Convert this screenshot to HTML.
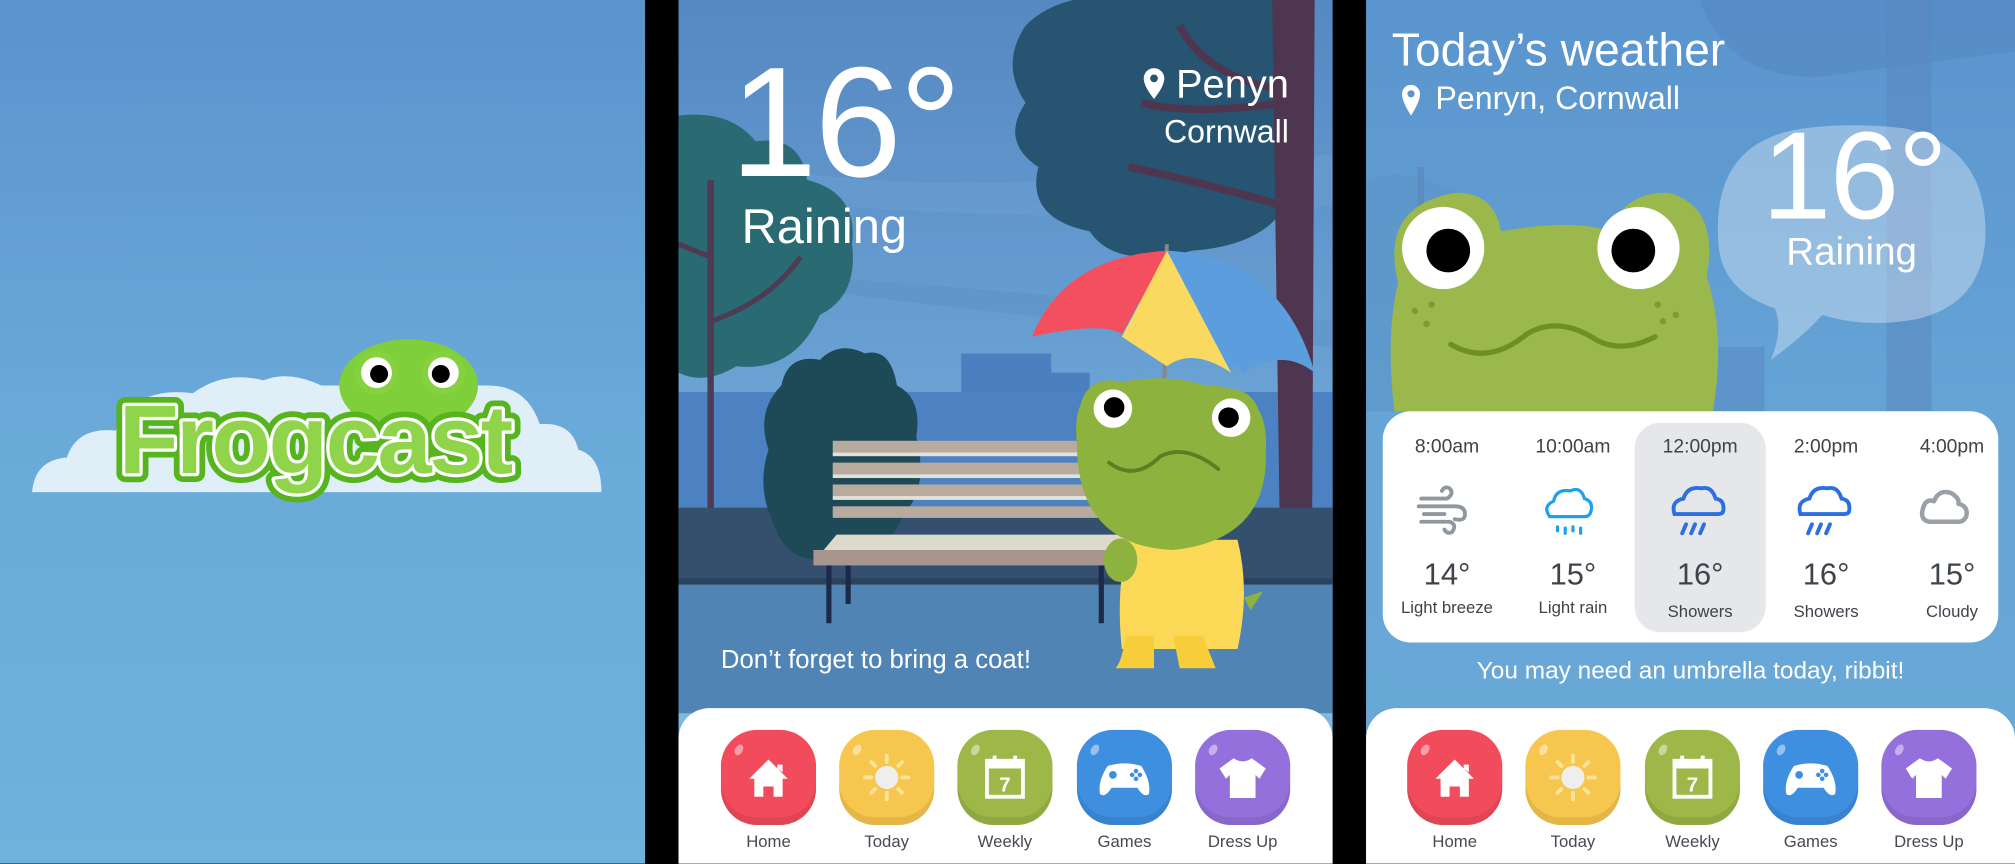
<!DOCTYPE html>
<html><head><meta charset="utf-8">
<style>
html,body{margin:0;padding:0;background:#000;width:2015px;height:863px;overflow:hidden}
#s{position:absolute;left:0;top:0;width:1568px;height:672px;transform:scale(1.28508,1.28508);transform-origin:0 0;font-family:"Liberation Sans","DejaVu Sans",sans-serif;background:#000}
.p{position:absolute;top:0;height:672px;overflow:hidden}
.a{position:absolute}
.w{color:#fff}
.nav{position:absolute;left:0;right:0;top:551px;height:130px;background:#fff;border-radius:24px 24px 0 0}
.b{position:absolute;top:17px;width:74px;height:74px;border-radius:28px;box-shadow:inset 0 -6px 0 rgba(0,0,0,.08)}
.b:before{content:"";position:absolute;left:11px;top:11px;width:6px;height:9px;border-radius:50%;background:rgba(255,255,255,.45);transform:rotate(30deg)}
.l{position:absolute;top:96px;width:90px;text-align:center;font-size:13px;color:#454a52}
.t{position:absolute;width:98px;text-align:center;color:#3e434a}
</style></head><body><div id="s">

<!-- Panel 1 -->
<div class="p" style="left:0;width:502px;background:linear-gradient(#5b93cd,#6aaad9 50%,#6fb2dc)">
  <svg class="a" style="left:0;top:0" width="502" height="672">
    <path d="M25 383 Q27 358 52 356 Q60 332 90 335 Q105 300 150 306 Q175 288 205 296 Q225 288 250 300 L380 300 Q410 300 420 330 Q445 328 450 350 Q468 355 468 383 Z" fill="#e0eef8"/>
    <ellipse cx="318" cy="300" rx="54" ry="36" fill="#7fcf3a"/>
    <circle cx="293" cy="290" r="17" fill="#86d13f"/><circle cx="345" cy="290" r="17" fill="#86d13f"/>
    <circle cx="293" cy="290" r="12" fill="#fff"/><circle cx="345" cy="290" r="12" fill="#fff"/>
    <circle cx="295" cy="291" r="7" fill="#000"/><circle cx="343" cy="291" r="7" fill="#000"/>
    <text x="245" y="368" text-anchor="middle" font-family="Liberation Sans,sans-serif" font-weight="bold" font-size="76" fill="#a8e26a" stroke="#56b51e" stroke-width="14" stroke-linejoin="round" letter-spacing="-2">Frogcast</text>
    <text x="245" y="368" text-anchor="middle" font-family="Liberation Sans,sans-serif" font-weight="bold" font-size="76" fill="#9ee05a" stroke="#fff" stroke-width="5" stroke-linejoin="round" letter-spacing="-2">Frogcast</text>
    <text x="245" y="368" text-anchor="middle" font-family="Liberation Sans,sans-serif" font-weight="bold" font-size="76" fill="#8fd44a" letter-spacing="-2">Frogcast</text>
  </svg>
</div>

<!-- Panel 2 -->
<div class="p" style="left:528px;width:509px;background:linear-gradient(#5688c2,#6aa2d4 45%,#7db9df 60%)">
  <svg class="a" style="left:0;top:0" width="509" height="672">
    <path d="M0 120 Q150 150 300 140 L509 120 L509 160 Q300 180 0 150Z" fill="#6a9dcf" opacity=".6"/>
    <path d="M100 215 Q250 225 509 250 L509 270 Q250 245 100 225Z" fill="#5d92c6" opacity=".6"/>
    <rect x="220" y="275" width="70" height="110" fill="#4a7fc0"/>
    <rect x="280" y="290" width="40" height="95" fill="#4a7fc0"/>
    <rect x="0" y="305" width="509" height="90" fill="#4d82c2"/>
    <path d="M0 90 Q40 85 60 110 Q95 105 100 140 Q140 150 135 190 Q140 230 110 245 Q90 290 45 285 Q20 300 0 290Z" fill="#2a6a73"/>
    <path d="M25 140 L25 440" stroke="#4e3a52" stroke-width="5"/>
    <path d="M25 250 Q70 235 95 200 M25 200 L0 190" stroke="#4e3a52" stroke-width="4" fill="none"/>
    <path d="M270 20 Q300 -10 360 0 L470 0 L480 140 Q470 190 400 195 Q340 210 320 180 Q270 170 280 130 Q250 110 270 80 Q250 50 270 20Z" fill="#275471"/>
    <path d="M360 80 Q400 90 470 80 M350 130 Q400 140 470 160 M390 20 Q410 60 470 70" stroke="#4f3650" stroke-width="6" fill="none"/>
    <path d="M462 0 L495 0 L493 420 L468 420Z" fill="#4f3650"/>
    <rect x="0" y="395" width="509" height="60" fill="#34506e"/>
    <rect x="0" y="450" width="509" height="5" fill="#2b425c"/>
    <rect x="0" y="455" width="509" height="100" fill="#4f84b4"/>
    <path d="M80 300 Q85 275 110 280 Q125 265 145 275 Q165 270 170 300 Q190 310 185 340 Q195 380 175 400 Q160 440 120 435 Q85 440 75 410 Q60 380 70 350 Q60 320 80 300Z" fill="#1e4a58"/>
    <g fill="#b9aa9e"><rect x="120" y="343" width="230" height="9"/><rect x="120" y="360" width="230" height="9"/><rect x="120" y="377" width="230" height="9"/><rect x="120" y="394" width="230" height="9"/></g>
    <g fill="#e4e2d8"><rect x="120" y="352" width="230" height="3"/><rect x="120" y="369" width="230" height="3"/><rect x="120" y="386" width="230" height="3"/></g>
    <path d="M113 428 L123 416 L350 416 L350 428Z" fill="#dcdacb"/>
    <rect x="105" y="428" width="245" height="12" fill="#a79690"/>
    <rect x="115" y="440" width="4" height="45" fill="#1c2a48"/><rect x="130" y="440" width="4" height="30" fill="#1c2a48"/>
    <rect x="327" y="440" width="4" height="45" fill="#1c2a48"/>
    <path d="M380 190 L378 300" stroke="#888" stroke-width="3"/>
    <path d="M275 262 Q300 200 380 195 L375 230 Z" fill="#f34f5e"/>
    <path d="M275 262 Q330 250 345 260 L380 195 Z" fill="#f34f5e"/>
    <path d="M345 262 L380 195 Q420 230 430 290 Q400 270 380 285 Z" fill="#fad961"/>
    <path d="M380 195 Q470 200 495 290 Q470 270 440 290 Q430 240 380 195 Z" fill="#5b9ddd"/>
    <path d="M380 195 Q440 240 440 290 Q430 280 430 290 Z" fill="#5b9ddd"/>
    <path d="M350 420 L435 420 Q445 460 435 505 L345 505 Q340 460 350 420Z" fill="#fbd957"/>
    <path d="M348 495 Q345 515 340 520 L370 520 L370 495Z M385 495 L390 520 L418 520 L408 495Z" fill="#f7cd3a"/>
    <ellipse cx="344" cy="436" rx="13" ry="17" fill="#8db33e"/>
    <path d="M440 465 L455 460 L445 475Z" fill="#8db33e"/>
    <path d="M310 345 Q305 300 340 298 Q380 290 410 300 Q460 300 457 350 Q460 420 385 428 Q310 425 310 345Z" fill="#8db33e"/>
    <circle cx="335" cy="318" r="22" fill="#8db33e"/><circle cx="430" cy="325" r="22" fill="#8db33e"/>
    <circle cx="338" cy="318" r="15" fill="#fff"/><circle cx="430" cy="325" r="15" fill="#fff"/>
    <circle cx="339" cy="317" r="8" fill="#000"/><circle cx="428" cy="325" r="8" fill="#000"/>
    <path d="M335 360 Q355 375 375 355 Q395 345 420 365" stroke="#5e7d25" stroke-width="3" fill="none" stroke-linecap="round"/>
  </svg>
  <div class="a w" style="left:40px;top:34px;font-size:122px;line-height:122px;letter-spacing:-2px">16°</div>
  <div class="a w" style="left:49px;top:156px;font-size:38px">Raining</div>
  <svg class="a" style="left:361px;top:52px" width="18" height="26"><path d="M9 1 A8 8 0 0 1 17 9 Q17 15 9 25 Q1 15 1 9 A8 8 0 0 1 9 1Z" fill="#fff"/><circle cx="9" cy="9" r="3" fill="#275471"/></svg>
  <div class="a w" style="right:34px;top:48px;font-size:31px">Penyn</div>
  <div class="a w" style="right:34px;top:89px;font-size:25px">Cornwall</div>
  <div class="a w" style="left:33px;top:503px;font-size:20px">Don’t forget to bring a coat!</div>
  <div class="nav">
    <div class="b" style="left:33px;background:#f24c5c"><svg width="74" height="74"><path d="M22 38 L37 23 L52 38 L48 38 L48 52 L41 52 L41 44 L33 44 L33 52 L26 52 L26 38Z M44 27 L48 27 L48 33 L44 30Z" fill="#fff"/></svg></div>
    <div class="b" style="left:125px;background:#f7c64e"><svg width="74" height="74"><circle cx="37" cy="37" r="9" fill="#eee"/><g stroke="#fde39a" stroke-width="3" stroke-linecap="round"><path d="M37 20v5M37 49v5M20 37h5M49 37h5M25 25l3 3M46 46l3 3M49 25l-3 3M28 46l-3 3"/></g></svg></div>
    <div class="b" style="left:217px;background:#9db748"><svg width="74" height="74"><rect x="23" y="24" width="28" height="28" fill="none" stroke="#fff" stroke-width="3"/><rect x="23" y="24" width="28" height="6" fill="#fff"/><path d="M29 20v7M45 20v7" stroke="#fff" stroke-width="3"/><text x="37" y="48" text-anchor="middle" font-size="16" font-weight="bold" fill="#fff" font-family="Liberation Sans">7</text></svg></div>
    <div class="b" style="left:310px;background:#3e8fe0"><svg width="74" height="74"><path d="M24 28 Q37 24 50 28 Q58 40 56 50 Q52 53 47 45 L27 45 Q22 53 18 50 Q16 40 24 28Z" fill="#fff"/><circle cx="28" cy="35" r="3" fill="#3e8fe0"/><g fill="#3e8fe0"><circle cx="46" cy="32" r="1.8"/><circle cx="46" cy="38" r="1.8"/><circle cx="43" cy="35" r="1.8"/><circle cx="49" cy="35" r="1.8"/></g></svg></div>
    <div class="b" style="left:402px;background:#9370dc"><svg width="74" height="74"><path d="M30 22 Q37 27 44 22 L55 30 L50 38 L47 35 L47 53 L27 53 L27 35 L24 38 L19 30Z" fill="#fff"/></svg></div>
    <div class="l" style="left:25px">Home</div><div class="l" style="left:117px">Today</div><div class="l" style="left:209px">Weekly</div><div class="l" style="left:302px">Games</div><div class="l" style="left:394px">Dress Up</div>
  </div>
</div>

<!-- Panel 3 -->
<div class="p" style="left:1063px;width:505px;background:linear-gradient(#5a94cd,#66a4d6 50%,#6aaad8)">
  <svg class="a" style="left:0;top:0" width="505" height="672">
    <path d="M260 0 Q280 60 350 60 L505 40 L505 0Z" fill="#5589c2" opacity=".6"/>
    <path d="M0 140 Q30 130 60 145 Q90 150 95 190 L95 320 L0 320Z" fill="#5b94c6" opacity=".6"/>
    <rect x="40" y="130" width="5" height="200" fill="#5a86b7" opacity=".6"/>
    <rect x="270" y="270" width="40" height="60" fill="#5a8fc6" opacity=".7"/>
    <rect x="405" y="0" width="35" height="320" fill="#5a86bb" opacity=".5"/>
    <path d="M274 185 Q270 110 340 100 Q380 95 420 100 Q482 115 482 180 Q482 235 430 248 Q390 256 355 245 Q340 262 315 280 Q325 255 318 240 Q274 225 274 185Z" fill="#fff" opacity=".33"/>
    <path d="M22 320 Q15 260 25 220 Q10 160 70 150 Q100 150 105 180 Q160 170 190 180 Q200 150 235 150 Q275 160 265 215 Q280 260 270 320Z" fill="#9ab84b"/>
    <circle cx="60" cy="193" r="32" fill="#fff"/><circle cx="212" cy="193" r="32" fill="#fff"/>
    <circle cx="64" cy="195" r="17" fill="#000"/><circle cx="208" cy="195" r="17" fill="#000"/>
    <path d="M66 268 Q95 285 125 260 Q150 245 180 265 Q200 275 225 262" stroke="#6f8f24" stroke-width="4" fill="none" stroke-linecap="round"/>
    <g fill="#7d9a34"><circle cx="38" cy="242" r="2.5"/><circle cx="47" cy="252" r="2.5"/><circle cx="51" cy="237" r="2.5"/><circle cx="227" cy="237" r="2.5"/><circle cx="231" cy="250" r="2.5"/><circle cx="241" cy="245" r="2.5"/></g>
  </svg>
  <div class="a w" style="left:20px;top:18px;font-size:36px">Today’s weather</div>
  <svg class="a" style="left:27px;top:65px" width="16" height="26"><path d="M8 1 A7 7 0 0 1 15 8 Q15 14 8 25 Q1 14 1 8 A7 7 0 0 1 8 1Z" fill="#fff"/><circle cx="8" cy="8" r="2.8" fill="#5a94cd"/></svg>
  <div class="a w" style="left:54px;top:63px;font-size:25px">Penryn, Cornwall</div>
  <div class="a w" style="left:308px;top:88px;font-size:97px;line-height:97px;letter-spacing:-1px">16°</div>
  <div class="a w" style="left:327px;top:180px;font-size:30px">Raining</div>
  <div class="a" style="left:13px;top:320px;width:479px;height:180px;background:#fff;border-radius:22px">
    <div class="a" style="left:196px;top:9px;width:102px;height:163px;background:#e6e7ea;border-radius:20px"></div>
    <div class="t" style="left:1px;top:19px;font-size:15px">8:00am</div>
    <div class="t" style="left:99px;top:19px;font-size:15px">10:00am</div>
    <div class="t" style="left:198px;top:19px;font-size:15px">12:00pm</div>
    <div class="t" style="left:296px;top:19px;font-size:15px">2:00pm</div>
    <div class="t" style="left:394px;top:19px;font-size:15px">4:00pm</div>
    <svg class="a" style="left:0;top:50px" width="479" height="60">
      <g stroke="#8f979f" stroke-width="3" fill="none" stroke-linecap="round"><path d="M30 18h20 q6 -4 2 -8 q-4 -2 -6 2 M28 24h28 q8 0 8 6 q0 6 -8 4 M32 30h16 M30 36h22 q6 2 2 8 q-4 2 -6 -2"/></g>
      <g stroke="#1ea0f0" stroke-width="2.5" fill="none" stroke-linecap="round"><path d="M130 32 q-6 -8 3 -12 q2 -10 13 -8 q8 -4 11 6 q7 2 5 10 q-1 4 -5 4 h-24 q-4 0 -3 0Z"/><path d="M136 40v3M142 41v4M148 40v3M154 41v4"/></g>
      <g stroke="#2c6fe0" stroke-width="3" fill="none" stroke-linecap="round"><path d="M227 30 q-3 -10 7 -12 q3 -10 14 -8 q8 -2 11 8 q7 1 6 9 q0 3 -4 3 h-30 q-4 0 -4 0Z"/><path d="M236 38l-3 7M243 38l-3 7M250 38l-3 7"/>
      <path d="M325 30 q-3 -10 7 -12 q3 -10 14 -8 q8 -2 11 8 q7 1 6 9 q0 3 -4 3 h-30 q-4 0 -4 0Z"/><path d="M334 38l-3 7M341 38l-3 7M348 38l-3 7"/></g>
      <path d="M425 36 q-8 -2 -4 -12 q2 -6 8 -4 q4 -10 14 -6 q6 4 5 8 q8 2 6 10 q-2 4 -6 4 Z" stroke="#9aa0a6" stroke-width="3.5" fill="none" stroke-linejoin="round"/>
    </svg>
    <div class="t" style="left:1px;top:114px;font-size:24px">14°</div>
    <div class="t" style="left:99px;top:114px;font-size:24px">15°</div>
    <div class="t" style="left:198px;top:114px;font-size:24px">16°</div>
    <div class="t" style="left:296px;top:114px;font-size:24px">16°</div>
    <div class="t" style="left:394px;top:114px;font-size:24px">15°</div>
    <div class="t" style="left:1px;top:145px;font-size:13px">Light breeze</div>
    <div class="t" style="left:99px;top:145px;font-size:13px">Light rain</div>
    <div class="t" style="left:198px;top:148px;font-size:13px">Showers</div>
    <div class="t" style="left:296px;top:148px;font-size:13px">Showers</div>
    <div class="t" style="left:394px;top:148px;font-size:13px">Cloudy</div>
  </div>
  <div class="a w" style="left:0;width:505px;text-align:center;top:512px;font-size:19px">You may need an umbrella today, ribbit!</div>
  <div class="nav">
    <div class="b" style="left:32px;background:#f24c5c"><svg width="74" height="74"><path d="M22 38 L37 23 L52 38 L48 38 L48 52 L41 52 L41 44 L33 44 L33 52 L26 52 L26 38Z M44 27 L48 27 L48 33 L44 30Z" fill="#fff"/></svg></div>
    <div class="b" style="left:124px;background:#f7c64e"><svg width="74" height="74"><circle cx="37" cy="37" r="9" fill="#eee"/><g stroke="#fde39a" stroke-width="3" stroke-linecap="round"><path d="M37 20v5M37 49v5M20 37h5M49 37h5M25 25l3 3M46 46l3 3M49 25l-3 3M28 46l-3 3"/></g></svg></div>
    <div class="b" style="left:217px;background:#9db748"><svg width="74" height="74"><rect x="23" y="24" width="28" height="28" fill="none" stroke="#fff" stroke-width="3"/><rect x="23" y="24" width="28" height="6" fill="#fff"/><path d="M29 20v7M45 20v7" stroke="#fff" stroke-width="3"/><text x="37" y="48" text-anchor="middle" font-size="16" font-weight="bold" fill="#fff" font-family="Liberation Sans">7</text></svg></div>
    <div class="b" style="left:309px;background:#3e8fe0"><svg width="74" height="74"><path d="M24 28 Q37 24 50 28 Q58 40 56 50 Q52 53 47 45 L27 45 Q22 53 18 50 Q16 40 24 28Z" fill="#fff"/><circle cx="28" cy="35" r="3" fill="#3e8fe0"/><g fill="#3e8fe0"><circle cx="46" cy="32" r="1.8"/><circle cx="46" cy="38" r="1.8"/><circle cx="43" cy="35" r="1.8"/><circle cx="49" cy="35" r="1.8"/></g></svg></div>
    <div class="b" style="left:401px;background:#9370dc"><svg width="74" height="74"><path d="M30 22 Q37 27 44 22 L55 30 L50 38 L47 35 L47 53 L27 53 L27 35 L24 38 L19 30Z" fill="#fff"/></svg></div>
    <div class="l" style="left:24px">Home</div><div class="l" style="left:116px">Today</div><div class="l" style="left:209px">Weekly</div><div class="l" style="left:301px">Games</div><div class="l" style="left:393px">Dress Up</div>
  </div>
</div>

</div></body></html>
